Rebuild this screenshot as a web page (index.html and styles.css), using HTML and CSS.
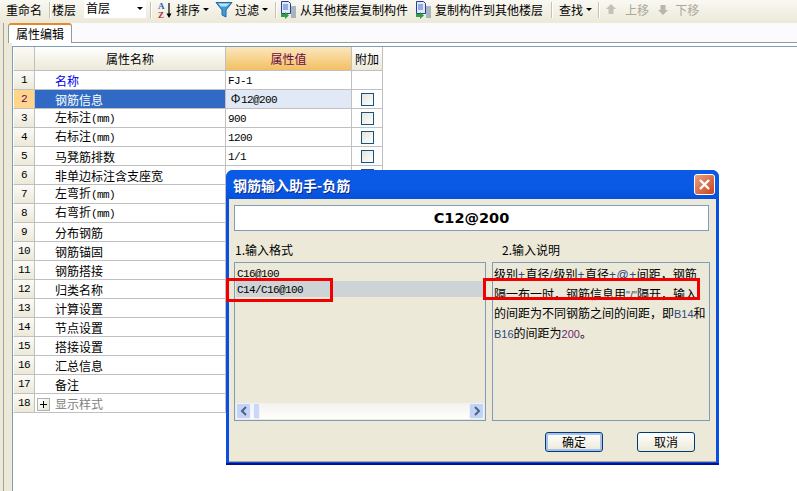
FILE: index.html
```html
<!DOCTYPE html>
<html lang="zh-CN">
<head>
    <meta charset="UTF-8">
    <title>钢筋输入助手</title>
    <link rel="stylesheet" href="styles.css">
</head>
<body>
    <div class="toolbar">
        <span class="tb-rename">重命名</span>
        <span class="sep sep-rename"></span>
        <span class="tb-floor">楼层</span>
        <div class="combo"><span>首层</span><i class="caret"></i></div>
        <span class="sep sep-combo"></span>
        <svg class="ic-sort" width="17" height="18" viewBox="0 0 17 18">
            <text x="2" y="7.500" class="az-a">A</text>
            <text x="2" y="17" class="az-z">Z</text>
            <path d="M13 2v13" stroke="#000" stroke-width="1.2"/>
            <path d="M10.5 12.5h5L13 17z" fill="#000"/>
        </svg>
        <span class="tb-label">排序</span>
        <i class="caret caret-tool"></i>
        <svg class="ic-filter" width="18" height="17" viewBox="0 0 18 17">
            <path d="M1 1.5h16L11 9v7L7 14V9z" fill="#3f9ad8" stroke="#1f6aa8"/>
            <path d="M3 2.5h12l-4 3H6z" fill="#bfe3f7"/>
        </svg>
        <span class="tb-filter">过滤</span>
        <i class="caret caret-tool"></i>
        <span class="sep sep-filter"></span>
        <svg class="ic-copy" width="17" height="18" viewBox="0 0 17 18">
            <path d="M1.5 .5h7l2 2v10h-9z" fill="#dfe9fb" stroke="#27408b"/>
            <path d="M3 4h5M3 6h5M3 8h5" stroke="#4a6fc4"/>
            <path d="M1 13h4v-2l4 3.5L5 18v-2H1z" fill="#2f9e3f"/>
            <path d="M11 6h5M11 8h5M11 10h5M11 12h5M11 14h5M11 16h5" stroke="#5b7a99"/>
        </svg>
        <span class="tb-label">从其他楼层复制构件</span>
        <svg class="ic-copy2" width="17" height="18" viewBox="0 0 17 18">
            <path d="M1.5 .5h7l2 2v10h-9z" fill="#dfe9fb" stroke="#27408b"/>
            <path d="M3 4h5M3 6h5M3 8h5" stroke="#4a6fc4"/>
            <path d="M1 13h4v-2l4 3.5L5 18v-2H1z" fill="#2f9e3f"/>
            <path d="M11 6h5M11 8h5M11 10h5M11 12h5M11 14h5M11 16h5" stroke="#5b7a99"/>
        </svg>
        <span class="tb-label">复制构件到其他楼层</span>
        <span class="sep sep-copy"></span>
        <span class="tb-find">查找</span>
        <i class="caret caret-tool"></i>
        <span class="sep sep-find"></span>
        <svg class="ic-up" width="10" height="11" viewBox="0 0 10 11"><path d="M5 0l5 5H7.500v5h-5V5H0z" fill="#c4c2b6"/></svg>
        <span class="tb-off">上移</span>
        <svg class="ic-down" width="10" height="11" viewBox="0 0 10 11"><path d="M5 11L0 6h2.500V1h5v5H10z" fill="#b9b7ab"/></svg>
        <span class="tb-off tb-off-down">下移</span>
    </div>

    <div class="workspace">
        <div class="tabs">
            <div class="tab">属性编辑</div>
        </div>
        <div class="panel">
            <table class="grid">
                <thead>
                    <tr>
                        <th class="idx"></th>
                        <th class="col-name">属性名称</th>
                        <th class="col-value">属性值</th>
                        <th class="col-add">附加</th>
                    </tr>
                </thead>
                <tbody>
                    <tr><td class="idx">1</td><td class="name name-blue">名称</td><td class="val"><span class="mono">FJ-1</span></td><td></td></tr>
                    <tr><td class="idx idx-on">2</td><td class="name name-on">钢筋信息</td><td class="val val-on"><span class="rebar-sign">Φ</span><span class="mono">12@200</span></td><td><i class="check"></i></td></tr>
                    <tr><td class="idx">3</td><td class="name">左标注<span class="mono">(mm)</span></td><td class="val"><span class="mono">900</span></td><td><i class="check"></i></td></tr>
                    <tr><td class="idx">4</td><td class="name">右标注<span class="mono">(mm)</span></td><td class="val"><span class="mono">1200</span></td><td><i class="check"></i></td></tr>
                    <tr><td class="idx">5</td><td class="name">马凳筋排数</td><td class="val"><span class="mono">1/1</span></td><td><i class="check"></i></td></tr>
                    <tr><td class="idx">6</td><td class="name">非单边标注含支座宽</td><td class="val"></td><td><i class="check"></i></td></tr>
                    <tr><td class="idx">7</td><td class="name">左弯折<span class="mono">(mm)</span></td><td></td><td></td></tr>
                    <tr><td class="idx">8</td><td class="name">右弯折<span class="mono">(mm)</span></td><td></td><td></td></tr>
                    <tr><td class="idx">9</td><td class="name">分布钢筋</td><td></td><td></td></tr>
                    <tr><td class="idx">10</td><td class="name">钢筋锚固</td><td></td><td></td></tr>
                    <tr><td class="idx">11</td><td class="name">钢筋搭接</td><td></td><td></td></tr>
                    <tr><td class="idx">12</td><td class="name">归类名称</td><td></td><td></td></tr>
                    <tr><td class="idx">13</td><td class="name">计算设置</td><td></td><td></td></tr>
                    <tr><td class="idx">14</td><td class="name">节点设置</td><td></td><td></td></tr>
                    <tr><td class="idx">15</td><td class="name">搭接设置</td><td></td><td></td></tr>
                    <tr><td class="idx">16</td><td class="name">汇总信息</td><td></td><td></td></tr>
                    <tr><td class="idx">17</td><td class="name">备注</td><td></td><td></td></tr>
                    <tr><td class="idx">18</td><td class="name name-group"><i class="plus"></i>显示样式</td><td></td><td></td></tr>
                </tbody>
            </table>
        </div>
    </div>

    <div class="dialog">
        <div class="dialog-title">
            <span>钢筋输入助手-负筋</span>
            <div class="close">
                <svg width="13" height="13" viewBox="0 0 13 13"><path d="M2 2l9 9M11 2l-9 9" stroke="#fff" stroke-width="2.400"/></svg>
            </div>
        </div>
        <div class="dialog-body">
            <div class="formula">C12@200</div>
            <div class="columns">
                <div class="col-left">
                    <div class="caption">1.输入格式</div>
                    <div class="listbox">
                        <div class="list-items">
                            <div class="list-item"><span class="mono">C16@100</span></div>
                            <div class="list-item list-item-on"><span class="mono">C14/C16@100</span></div>
                        </div>
                        <div class="hscroll">
                            <div class="sb-btn"><svg width="8" height="10" viewBox="0 0 8 10"><path d="M6 1L2 5l4 4" fill="none" stroke="#4d6185" stroke-width="2"/></svg></div>
                            <div class="sb-thumb"></div>
                            <div class="sb-track"></div>
                            <div class="sb-btn"><svg width="8" height="10" viewBox="0 0 8 10"><path d="M2 1l4 4-4 4" fill="none" stroke="#4d6185" stroke-width="2"/></svg></div>
                        </div>
                    </div>
                </div>
                <div class="col-right">
                    <div class="caption caption-right">2.输入说明</div>
                    <div class="helpbox">级别<b class="op">+</b>直径<b class="op">/</b>级别<b class="op">+</b>直径<b class="op">+@+</b>间距，钢筋<br>隔一布一时，钢筋信息用<b>"/"</b>隔开，输入<br>的间距为不同钢筋之间的间距，即<b>B14</b>和<br><b>B16</b>的间距为<b class="num">200</b>。</div>
                </div>
            </div>
            <div class="actions">
                <div class="btn btn-default">确定</div>
                <div class="btn">取消</div>
            </div>
        </div>
        <div class="mark mark-left"></div>
        <div class="mark mark-right"></div>
    </div>
</body>
</html>
```

FILE: styles.css
```css
* {
    box-sizing: border-box;
}
html, body {
    margin: 0;
    height: 491px;
    overflow: hidden;
}
body {
    position: relative;
    font-family: "Noto Sans CJK SC", sans-serif;
    font-size: 12px;
    line-height: 16px;
    color: #000;
    background-color: #ece9d8;
}
.mono {
    font-family: "Liberation Mono", monospace;
    font-size: 11px;
    letter-spacing: -0.6px;
}

/* toolbar */
.toolbar {
    display: flex;
    align-items: center;
    height: 23px;
    padding: 0 0 4px 6px;
    background: linear-gradient(#f9f8f3, #ece9d8);
    white-space: nowrap;
}
.sep {
    width: 1px;
    height: 16px;
    background-color: #c5c2b2;
    box-shadow: 1px 0 0 #fff;
}
.sep-rename { margin-left: 7px; }
.tb-floor { margin-left: 2px; }
.combo {
    display: flex;
    align-items: center;
    justify-content: space-between;
    width: 62px;
    height: 20px;
    margin-left: 8px;
    margin-top: -3px;
    padding: 0 3px 0 2px;
    background-color: #fff;
}
.caret {
    display: block;
    width: 0;
    height: 0;
    border-left: 3px solid transparent;
    border-right: 3px solid transparent;
    border-top: 3px solid #000;
}
.caret-tool { margin-left: 3px; }
.sep-combo { margin-left: 4px; }
.ic-sort { margin-left: 5px; }
.az-a, .az-z {
    font-family: "Liberation Serif", serif;
    font-size: 9px;
    font-weight: bold;
}
.az-a { fill: #2d5fb0; }
.az-z { fill: #a83232; }
.tb-label { margin-left: 3px; }
.ic-filter { margin-left: 6px; }
.tb-filter { margin-left: 2px; }
.sep-filter { margin-left: 7px; }
.ic-copy { margin-left: 4px; }
.ic-copy2 { margin-left: 7px; }
.sep-copy { margin-left: 8px; }
.tb-find { margin-left: 7px; }
.sep-find { margin-left: 6px; }
.ic-up { margin-left: 7px; }
.tb-off {
    margin-left: 9px;
    color: #aca899;
}
.ic-down { margin-left: 9px; }
.tb-off-down { margin-left: 7px; }

/* tab strip and property grid */
.workspace {
    height: 468px;
    margin-left: 3px;
    padding-left: 2px;
    border-left: 1px solid #a5a297;
}
.tabs {
    height: 20px;
    margin-left: 2px;
    background-color: #fbfbfe;
    border-bottom: 1px solid #919b9c;
}
.tab {
    width: 64px;
    height: 20px;
    padding-top: 1px;
    text-align: center;
    background-color: #fff;
    border: 1px solid #919b9c;
    border-top: 2px solid #e68b2c;
    border-bottom: none;
    border-radius: 3px 3px 0 0;
}
.panel {
    height: 448px;
    margin-left: 6px;
    padding: 3px 0 0 0;
    background-color: #fff;
}
.grid {
    display: block;
    border-collapse: separate;
    border-spacing: 0;
    table-layout: fixed;
    border-top: 1px solid #7f9db9;
    border-left: 1px solid #7f9db9;
    width: 785px;
    height: 445px;
}
.grid th, .grid td {
    padding: 0;
    border-right: 1px solid #c0c0c0;
    border-bottom: 1px solid #c0c0c0;
    font-weight: normal;
}
.grid th {
    height: 24px;
    text-align: center;
    background: linear-gradient(#fff, #ece9d8);
}
.grid td {
    height: 19px;
    line-height: 15px;
}
.grid .idx {
    width: 22px;
    text-align: center;
    font-family: "Liberation Mono", monospace;
    font-size: 11px;
    letter-spacing: -0.6px;
    background: linear-gradient(#fbfaf6, #ece9d8);
    border-left: 1px solid #fff;
}
.grid .idx-on {
    color: #600060;
    background: #ffd58b;
}
.grid .col-name { width: 191px; }
.grid .col-value {
    width: 126px;
    color: #6b0a4a;
    background: linear-gradient(#fbe7bd, #f2c061);
}
.grid .col-add { width: 31px; }
.grid .name { padding-left: 20px; }
.name-blue { color: #0000f0; }
.name-on {
    color: #fff;
    background-color: #316ac5;
}
.grid .name-group {
    color: #808080;
    padding-left: 2px;
}
.grid .val { padding-left: 2px; }
.val-on { background-color: #e0e9f5; }
.rebar-sign {
    display: inline-block;
    width: 11px;
    margin-left: 2px;
    text-align: center;
}
.check {
    display: block;
    width: 13px;
    height: 13px;
    margin: 0 auto;
    background: linear-gradient(135deg, #e6e5dc, #fff);
    border: 1px solid #1c5180;
}
.plus {
    display: inline-block;
    position: relative;
    width: 13px;
    height: 13px;
    margin-right: 5px;
    vertical-align: -2px;
    background: linear-gradient(135deg, #fff, #e6e5dc);
    border: 1px solid #b0b0a8;
}
.plus::before, .plus::after {
    content: "";
    position: absolute;
    background-color: #000;
}
.plus::before { left: 2px; top: 5px; width: 7px; height: 1px; }
.plus::after { left: 5px; top: 2px; width: 1px; height: 7px; }

/* dialog */
.dialog {
    position: absolute;
    left: 226px;
    top: 170px;
    width: 493px;
    height: 295px;
    display: flex;
    flex-direction: column;
    background-color: #0a4fe0;
    border-radius: 7px 7px 0 0;
    box-shadow: inset 0 -2px 0 #00138c;
}
.dialog-title {
    display: flex;
    align-items: center;
    justify-content: space-between;
    height: 29px;
    flex: none;
    padding: 0 4px 0 7px;
    color: #fff;
    font-size: 14px;
    font-weight: bold;
    text-shadow: 1px 1px 0 #0a2a8c;
    background: linear-gradient(#0a5ae6, #0a5ae6 60%, #0550dc);
    border-radius: 7px 7px 0 0;
}
.close {
    display: flex;
    align-items: center;
    justify-content: center;
    width: 21px;
    height: 21px;
    background: linear-gradient(135deg, #e9a080, #c9431c);
    border: 1px solid #fff;
    border-radius: 3px;
}
.dialog-body {
    flex: 1;
    margin: 0 3px 3px 3px;
    padding: 6px 6px 0 5px;
    background-color: #ece9d8;
    border-bottom: 1px solid #aca899;
}
.formula {
    width: 475px;
    height: 26px;
    line-height: 24px;
    text-align: center;
    font-family: "DejaVu Sans", sans-serif;
    font-size: 14.500px;
    font-weight: bold;
    background-color: #fff;
    border: 1px solid #7f9db9;
}
.columns {
    display: flex;
    gap: 6px;
    margin-top: 11px;
}
.caption {
    height: 20px;
    padding-left: 1px;
}
.caption-right { padding-left: 10px; }
.col-left { width: 252px; }
.col-right { width: 218px; }
.listbox, .helpbox {
    height: 159px;
    border: 1px solid #7f9db9;
}
.listbox {
    display: flex;
    flex-direction: column;
    justify-content: space-between;
    padding: 1px;
}
.list-items { padding-top: 1px; }
.list-item {
    height: 16px;
    line-height: 13px;
    padding-left: 1px;
}
.list-item-on {
    line-height: 14px;
    background-color: #ced4d6;
}
.hscroll {
    display: flex;
    height: 16px;
    background: linear-gradient(#f3f1ec, #fff);
}
.sb-btn {
    display: flex;
    align-items: center;
    justify-content: center;
    width: 15px;
    height: 16px;
    background-color: #c3d3f8;
    border: 1px solid #eef2fd;
    border-radius: 2px;
}
.sb-thumb {
    width: 7px;
    margin-left: 2px;
    background-color: #c9d7f9;
    border: 1px solid #eef2fd;
    border-radius: 2px;
}
.sb-track { flex: 1; }
.helpbox {
    padding: 2px 0 0 1px;
    line-height: 17.500px;
    white-space: nowrap;
}
.helpbox b {
    font-family: "Liberation Sans", sans-serif;
    font-size: 11px;
    font-weight: normal;
    color: #2c4a7a;
}
.helpbox .op {
    font-size: 12px;
    letter-spacing: 0.5px;
}
.helpbox .num { color: #6a2a70; }
.actions {
    display: flex;
    gap: 34px;
    margin-top: 11px;
    padding-left: 311px;
}
.btn {
    width: 58px;
    height: 20px;
    line-height: 18px;
    text-align: center;
    background: linear-gradient(#fff, #ece9d8);
    border: 1px solid #003c74;
    border-radius: 3px;
}
.btn-default {
    box-shadow: inset 0 0 0 2px #a9c0ea;
}
.mark {
    position: absolute;
    border: 3px solid #f00000;
}
.mark-left {
    left: 0;
    top: 108px;
    width: 107px;
    height: 24px;
}
.mark-right {
    left: 257px;
    top: 108px;
    width: 217px;
    height: 22px;
}
```
